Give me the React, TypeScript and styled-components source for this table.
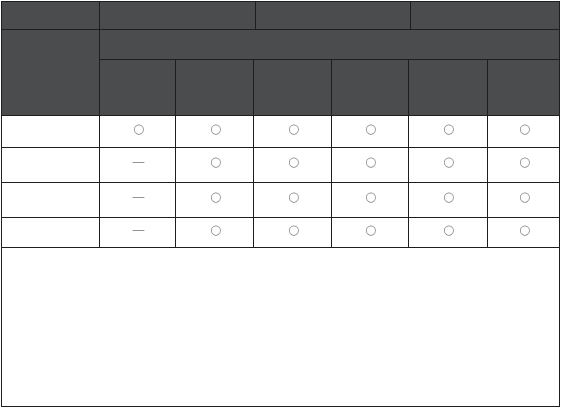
import React from 'react';
import styled, { createGlobalStyle } from 'styled-components';

const LINE = '#1e1e1e';
const HEAD = '#4b4c4e';
const COLS = '97px 75px 77px 77px 76px 78px 71px';

const Global = createGlobalStyle`
  html, body { margin: 0; padding: 0; background: #fff; }
  body {
    font-family: "DejaVu Sans", "Liberation Sans", sans-serif;
    -webkit-font-smoothing: antialiased;
  }
`;

const Frame = styled.div`
  margin: 1px 0 0 1px;
  width: 559px;
  box-sizing: border-box;
  padding: 1px;
  background: ${LINE};
  display: flex;
  flex-direction: column;
  gap: 1px;
`;

const TopBand = styled.div`
  display: grid;
  grid-template-columns: 97px 155px 154px 148px;
  gap: 1px;
  height: 27px;
`;

const HeadCell = styled.div`
  background: ${HEAD};
`;

const HeaderBand = styled.div`
  display: grid;
  grid-template-columns: 97px 1fr;
  gap: 1px;
  height: 85px;
`;

const HeaderRight = styled.div`
  display: grid;
  grid-template-rows: 29px 55px;
  gap: 1px;
`;

const SubHeads = styled.div`
  display: grid;
  grid-template-columns: 75px 77px 77px 76px 78px 71px;
  gap: 1px;
`;

const DataRow = styled.div<{ $h: number }>`
  display: grid;
  grid-template-columns: ${COLS};
  gap: 1px;
  height: ${(p) => p.$h}px;
`;

const Cell = styled.div`
  background: #fff;
  display: flex;
  align-items: center;
  justify-content: center;
  padding: 0 0 7px 2px;
  box-sizing: border-box;
`;

const Mark = styled.span`
  display: inline-block;
  color: #858585;
  font-size: 13px;
  line-height: 1;
  will-change: transform;
  transform: translateZ(0);
`;

const Footer = styled.div`
  background: #fff;
  height: 158px;
`;

const rows: { h: number; marks: string[] }[] = [
  { h: 31, marks: ['○', '○', '○', '○', '○', '○'] },
  { h: 34, marks: ['—', '○', '○', '○', '○', '○'] },
  { h: 34, marks: ['—', '○', '○', '○', '○', '○'] },
  { h: 29, marks: ['—', '○', '○', '○', '○', '○'] },
];

export default function App() {
  return (
    <>
      <Global />
      <Frame>
        <TopBand>
          <HeadCell />
          <HeadCell />
          <HeadCell />
          <HeadCell />
        </TopBand>
        <HeaderBand>
          <HeadCell />
          <HeaderRight>
            <HeadCell />
            <SubHeads>
              {Array.from({ length: 6 }).map((_, i) => (
                <HeadCell key={i} />
              ))}
            </SubHeads>
          </HeaderRight>
        </HeaderBand>
        {rows.map((r, i) => (
          <DataRow key={i} $h={r.h}>
            <Cell />
            {r.marks.map((m, j) => (
              <Cell key={j}>
                <Mark>{m}</Mark>
              </Cell>
            ))}
          </DataRow>
        ))}
        <Footer />
      </Frame>
    </>
  );
}
